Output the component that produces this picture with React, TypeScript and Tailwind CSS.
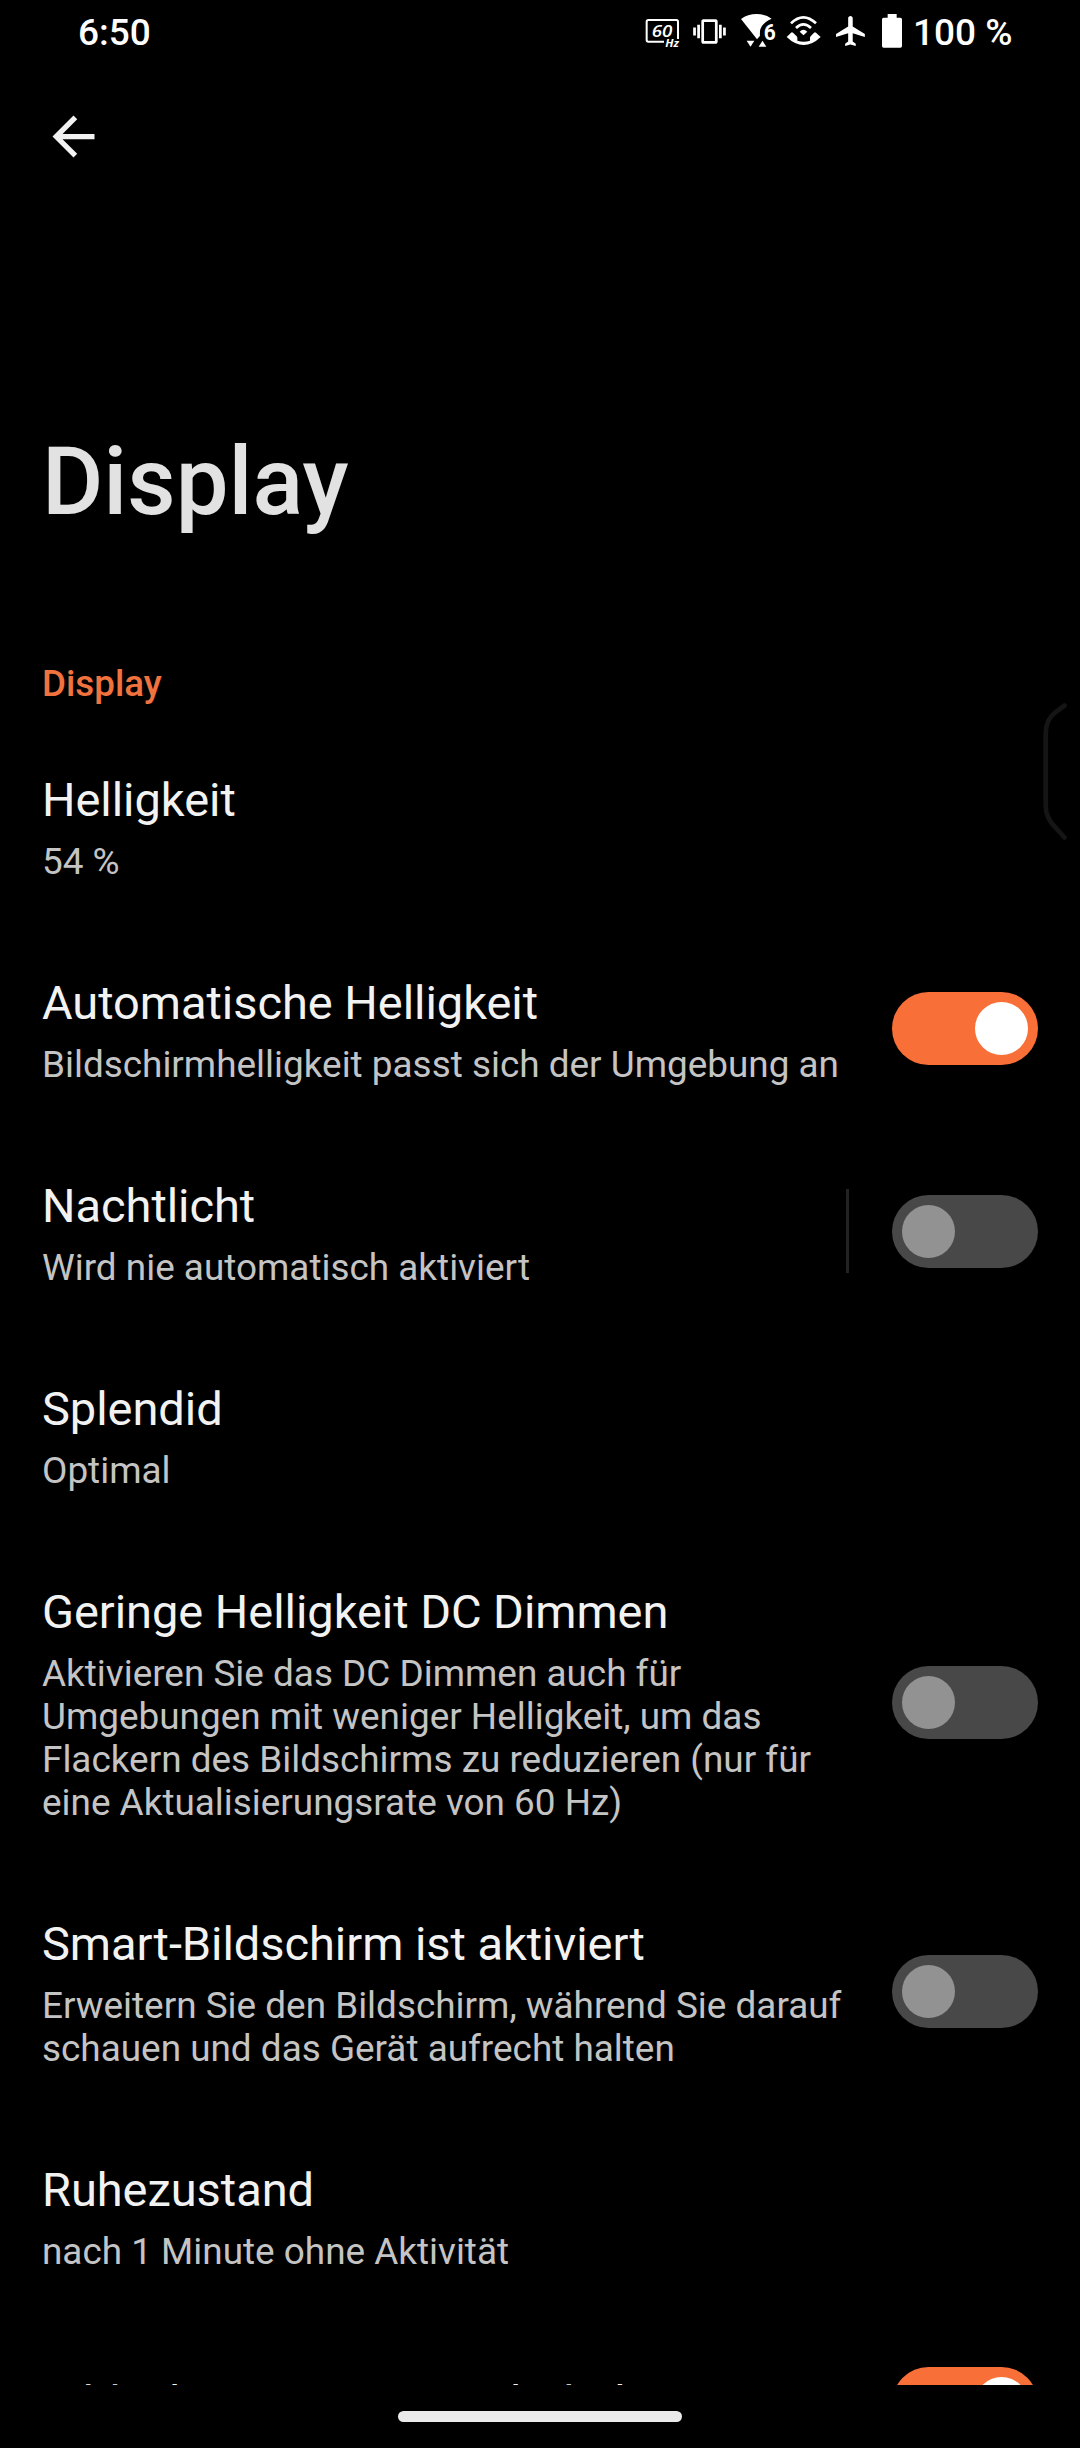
import React from "react";

interface SettingItem {
  title: string;
  summary?: string;
  checked?: boolean;
  divider?: boolean;
}

const settings: SettingItem[] = [
  { title: "Helligkeit", summary: "54 %" },
  {
    title: "Automatische Helligkeit",
    summary: "Bildschirmhelligkeit passt sich der Umgebung an",
    checked: true,
  },
  {
    title: "Nachtlicht",
    summary: "Wird nie automatisch aktiviert",
    checked: false,
    divider: true,
  },
  { title: "Splendid", summary: "Optimal" },
  {
    title: "Geringe Helligkeit DC Dimmen",
    summary:
      "Aktivieren Sie das DC Dimmen auch für Umgebungen mit weniger Helligkeit, um das Flackern des Bildschirms zu reduzieren (nur für eine Aktualisierungsrate von 60 Hz)",
    checked: false,
  },
  {
    title: "Smart-Bildschirm ist aktiviert",
    summary:
      "Erweitern Sie den Bildschirm, während Sie darauf schauen und das Gerät aufrecht halten",
    checked: false,
  },
  { title: "Ruhezustand", summary: "nach 1 Minute ohne Aktivität" },
  { title: "Bildschirm automatisch drehen", checked: true },
];

const RefreshRateIcon = () => (
  <svg width="42" height="64" viewBox="36 0 126 192" fill="none">
    <path
      d="M102 125H55Q50 125 50 120V65Q50 60 55 60H139Q144 60 144 65V117"
      stroke="white"
      strokeWidth="6"
    />
    <text
      x="65"
      y="111"
      fill="white"
      fontFamily="Open Sans"
      fontSize="51"
      fontWeight="600"
      fontStyle="italic"
      textLength="62"
      lengthAdjust="spacingAndGlyphs"
    >
      60
    </text>
    <text
      x="106"
      y="142"
      fill="white"
      fontFamily="Open Sans"
      fontSize="32"
      fontWeight="700"
      fontStyle="italic"
      textLength="41"
      lengthAdjust="spacingAndGlyphs"
    >
      Hz
    </text>
  </svg>
);

const VibrateIcon = () => (
  <svg width="48" height="64" viewBox="162 0 144 192" fill="white">
    <path
      transform="translate(189.5 45.5) scale(4.08)"
      d="M0 15h2V9H0v6zm3 2h2V7H3v10zm19-8v6h2V9h-2zm-3 8h2V7h-2v10zM16.5 3h-9C6.67 3 6 3.67 6 4.5v15c0 .83.67 1.5 1.5 1.5h9c.83 0 1.5-.67 1.5-1.5v-15c0-.83-.67-1.5-1.5-1.5zM16 19H8V5h8v14z"
    />
  </svg>
);

const WifiIcon = () => (
  <svg width="50" height="64" viewBox="306 0 150 192" fill="white">
    <path d="M333 57Q353 42 380 42Q406 42 425 56Q397 68 391 88Q389 97 390 107L381 118Z" />
    <path d="M350 122H373L361.5 140Z" />
    <path d="M386 140H409L397.5 122Z" />
    <text
      x="401"
      y="119"
      fontFamily="Roboto"
      fontSize="66"
      fontWeight="700"
      textLength="36"
      lengthAdjust="spacingAndGlyphs"
    >
      6
    </text>
  </svg>
);

const WifiCallIcon = () => (
  <svg width="47" height="64" viewBox="456 0 141 192" fill="none">
    <path d="M483 70Q520 34 558 70" stroke="white" strokeWidth="8" />
    <path d="M498 84Q520 62 543 84" stroke="white" strokeWidth="8" />
    <path d="M509 95Q520 84 532 95L520.5 106Z" fill="white" />
    <path
      d="M470 111L483 98Q486 95 489 98L500 109Q502 111 502 114V122Q521 128 540 122V114Q540 111 542 109L552 98Q555 95 558 98L572 111Q547 135 521 135Q495 135 470 111Z"
      fill="white"
    />
  </svg>
);

const AirplaneIcon = () => (
  <svg width="45" height="64" viewBox="-3 0 135 192" fill="white">
    <path
      transform="translate(9 39) scale(4.55 4.5)"
      d="M21 16v-2l-8-5V3.5c0-.83-.67-1.5-1.5-1.5S10 2.67 10 3.5V9l-8 5v2l8-2.5V19l-2 1.5V22l3.5-1 3.5 1v-1.5L13 19v-5.5l8 2.5z"
    />
  </svg>
);

const BatteryIcon = () => (
  <svg width="36" height="64" viewBox="132 0 108 192" fill="white">
    <path d="M173 42H200V53H211Q216 53 216 58V138Q216 143 211 143H161Q156 143 156 138V58Q156 53 161 53H173Z" />
  </svg>
);

const Switch: React.FC<{ checked: boolean }> = ({ checked }) => (
  <div
    className={`flex h-[73px] w-[146px] shrink-0 items-center rounded-full p-[10px] ${
      checked ? "justify-end bg-[#f96f38]" : "justify-start bg-[#484848]"
    }`}
  >
    <div className={`size-[53px] rounded-full ${checked ? "bg-white" : "bg-[#929292]"}`} />
  </div>
);

const SettingRow: React.FC<{ item: SettingItem }> = ({ item }) => (
  <div className="flex min-h-[173px] shrink-0 items-center px-[42px]">
    <div className={`w-[808px] ${item.summary ? "pt-12 pb-11" : "pb-px"}`}>
      <h2 className="text-[47px] leading-[56px] tracking-[-0.05px] whitespace-nowrap text-[#f2f2f2]">
        {item.title}
      </h2>
      {item.summary && (
        <p className="mt-3 text-[36.9px] leading-[43px] text-[#c4c4c4]">{item.summary}</p>
      )}
    </div>
    {item.divider && <div className="-mt-px -ml-1 h-[84px] w-[3px] bg-[#222222]" />}
    {item.checked !== undefined && (
      <div className="ml-auto">
        <Switch checked={item.checked} />
      </div>
    )}
  </div>
);

const App = () => {
  return (
    <div className="relative flex h-[2448px] w-[1080px] flex-col overflow-hidden bg-black font-['Roboto',sans-serif]">
      <header className="flex h-16 shrink-0 items-center justify-between pt-px pr-[68px] pl-[78px] text-[37px] leading-[43px] font-medium text-white">
        <span>6:50</span>
        <div className="-mt-px flex items-center">
          <RefreshRateIcon />
          <VibrateIcon />
          <WifiIcon />
          <WifiCallIcon />
          <AirplaneIcon />
          <BatteryIcon />
          <span className="mt-px ml-[3px] w-[99px] whitespace-nowrap">100 %</span>
        </div>
      </header>

      <div className="shrink-0 pt-[41px] pl-[42px]">
        <svg width="63" height="63" viewBox="0 0 24 24" fill="#f2f2f2">
          <path d="M20 11H7.83l5.59-5.59L12 4l-8 8 8 8 1.41-1.41L7.83 13H20v-2z" />
        </svg>
      </div>

      <h1 className="mt-[259px] shrink-0 pl-[42px] text-[94px] leading-[111px] font-medium text-[#e2e2e2]">
        Display
      </h1>

      <main className="flex h-[1847px] shrink-0 flex-col overflow-hidden pt-[124px]">
        <div className="mb-[19px] shrink-0 pl-[42px] text-[36.75px] leading-[43px] font-medium text-[#f0733f]">
          Display
        </div>
        {settings.map((item) => (
          <SettingRow key={item.title} item={item} />
        ))}
      </main>

      <footer className="flex shrink-0 justify-center pt-[26px]">
        <div className="h-[11px] w-[284px] rounded-full bg-[#ebebeb]" />
      </footer>

      {/* edge panel handle */}
      <svg
        className="absolute top-[700px] right-[10px]"
        width="30"
        height="144"
        viewBox="0 0 30 144"
        fill="none"
      >
        <path
          d="M24.5 5.5L15 12.5Q5.7 20 5.7 33V105Q5.7 118 15 127L24.5 137.5"
          stroke="#151515"
          strokeWidth="4.7"
          strokeLinecap="round"
        />
      </svg>
    </div>
  );
};

export default App;
